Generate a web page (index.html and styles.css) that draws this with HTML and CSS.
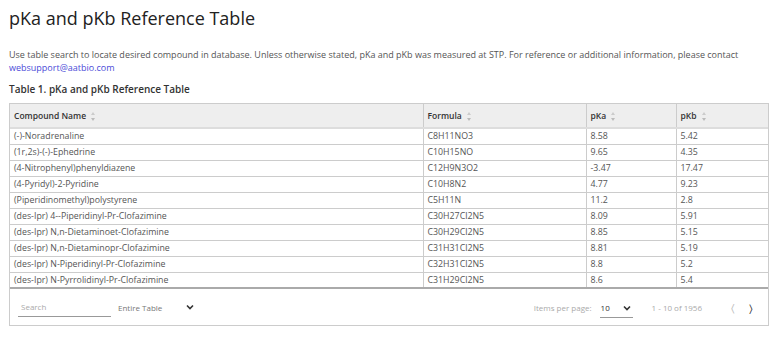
FILE: index.html
```html
<!DOCTYPE html>
<html lang="en">
<head>
    <meta charset="UTF-8">
    <title>pKa and pKb Reference Table</title>
    <link rel="stylesheet" href="styles.css">
</head>
<body>
    <div class="page">
        <h1 class="title">pKa and pKb Reference Table</h1>
        <p class="intro">Use table search to locate desired compound in database. Unless otherwise stated, pKa and pKb was measured at STP. For reference or additional information, please contact <a href="#">websupport@aatbio.com</a></p>
        <h3 class="caption">Table 1. pKa and pKb Reference Table</h3>

        <div class="box">
            <table class="data">
                <thead>
                    <tr>
                        <th class="c-name">Compound Name <span class="sort"></span></th>
                        <th class="c-formula">Formula <span class="sort"></span></th>
                        <th class="c-pka">pKa <span class="sort"></span></th>
                        <th class="c-pkb">pKb <span class="sort"></span></th>
                    </tr>
                </thead>
                <tbody>
                    <tr><td>(-)-Noradrenaline</td><td>C8H11NO3</td><td>8.58</td><td>5.42</td></tr>
                    <tr><td>(1r,2s)-(-)-Ephedrine</td><td>C10H15NO</td><td>9.65</td><td>4.35</td></tr>
                    <tr><td>(4-Nitrophenyl)phenyldiazene</td><td>C12H9N3O2</td><td>-3.47</td><td>17.47</td></tr>
                    <tr><td>(4-Pyridyl)-2-Pyridine</td><td>C10H8N2</td><td>4.77</td><td>9.23</td></tr>
                    <tr><td>(Piperidinomethyl)polystyrene</td><td>C5H11N</td><td>11.2</td><td>2.8</td></tr>
                    <tr><td>(des-Ipr) 4--Piperidinyl-Pr-Clofazimine</td><td>C30H27Cl2N5</td><td>8.09</td><td>5.91</td></tr>
                    <tr><td>(des-Ipr) N,n-Dietaminoet-Clofazimine</td><td>C30H29Cl2N5</td><td>8.85</td><td>5.15</td></tr>
                    <tr><td>(des-Ipr) N,n-Dietaminopr-Clofazimine</td><td>C31H31Cl2N5</td><td>8.81</td><td>5.19</td></tr>
                    <tr><td>(des-Ipr) N-Piperidinyl-Pr-Clofazimine</td><td>C32H31Cl2N5</td><td>8.8</td><td>5.2</td></tr>
                    <tr><td>(des-Ipr) N-Pyrrolidinyl-Pr-Clofazimine</td><td>C31H29Cl2N5</td><td>8.6</td><td>5.4</td></tr>
                </tbody>
            </table>
        </div>

        <div class="footer">
            <div class="filters">
                <input type="text" class="search" placeholder="Search">
                <div class="scope">
                    <span>Entire Table</span>
                    <svg class="chev" width="8" height="6" viewBox="0 0 8 6"><path d="M1 1.5 L4 4.5 L7 1.5" fill="none" stroke="#333" stroke-width="1.6"/></svg>
                </div>
            </div>
            <div class="pager">
                <span class="muted">Items per page:</span>
                <div class="per-page">
                    <span>10</span>
                    <svg class="chev" width="8" height="6" viewBox="0 0 8 6"><path d="M1 1.5 L4 4.5 L7 1.5" fill="none" stroke="#333" stroke-width="1.6"/></svg>
                </div>
                <span class="muted range">1 - 10 of 1956</span>
                <span class="nav prev">&#x2329;</span>
                <span class="nav next">&#x232A;</span>
            </div>
        </div>
    </div>
</body>
</html>
```

FILE: styles.css
```css
*{
    margin: 0; padding: 0;
    box-sizing: border-box;
}
body{
    font-family: 'Open Sans', 'Liberation Sans', sans-serif;
    background: #fff;
    color: #555;
}
.page{
    padding: 6px 12px 0 9px;
}
.title{
    font-size: 18px;
    font-weight: 400;
    color: #222;
    line-height: 24px;
}
.intro{
    margin-top: 18px;
    font-size: 9px;
    line-height: 13px;
    color: #555;
}
.intro a{
    color: #4b4bd8;
    text-decoration: none;
}
.caption{
    margin-top: 8px;
    font-size: 10px;
    font-weight: 600;
    color: #333;
    line-height: 14px;
}
.box{
    margin-top: 7px;
    border: 1px solid #ccc;
    border-bottom: none;
}
.data{
    width: 100%;
    border-collapse: collapse;
    font-size: 8.8px;
}
.data th{
    background: #eee;
    height: 24px;
    text-align: left;
    font-weight: 600;
    font-size: 8.5px;
    color: #333;
    padding: 0 4px;
    border-bottom: 2px solid #ddd;
    border-left: 1px solid #ccc;
}
.data td{
    height: 16px;
    padding: 0 4px;
    border-bottom: 1px solid #ccc;
    border-left: 1px solid #ccc;
}
.data th:first-child,
.data td:first-child{
    border-left: none;
}
.data tbody tr:last-child td{
    border-bottom: 2px solid #aaa;
}
.c-name{ width: 413px; }
.c-formula{ width: 163px; }
.c-pka{ width: 90px; }
.sort{
    display: inline-block;
    width: 6px;
    height: 9px;
    margin-left: 2px;
    vertical-align: middle;
    position: relative;
}
.sort::before,
.sort::after{
    content: "";
    position: absolute;
    left: 1px;
    border-left: 2px solid transparent;
    border-right: 2px solid transparent;
}
.sort::before{
    top: 0;
    border-bottom: 3px solid #ccc;
}
.sort::after{
    bottom: 0;
    border-top: 3px solid #bbb;
}
.footer{
    border: 1px solid #ccc;
    border-top: none;
    height: 37px;
    display: flex;
    align-items: center;
    justify-content: space-between;
    padding: 0 15px 0 8px;
    font-size: 8px;
}
.filters{
    display: flex;
    align-items: center;
}
.search{
    width: 93px;
    height: 17px;
    border: none;
    border-bottom: 1px solid #999;
    font-family: inherit;
    font-size: 8px;
    padding: 0 3px 2px;
    margin-top: 2px;
    outline: none;
}
.search::placeholder{
    color: #aaa;
}
.scope{
    display: flex;
    align-items: center;
    margin-left: 7px;
    color: #777;
    width: 76px;
    justify-content: space-between;
}
.pager{
    display: flex;
    align-items: center;
}
.muted{
    color: #aaa;
}
.per-page{
    display: flex;
    align-items: center;
    justify-content: space-between;
    width: 33px;
    margin-left: 8px;
    padding: 0 2px 4px 1px;
    border-bottom: 1px solid #999;
    color: #333;
    margin-top: 6px;
}
.range{
    margin-left: 19px;
}
.nav{
    font-size: 11px;
    margin-left: 29px;
    color: #bbb;
}
.next{
    margin-left: 14px;
    color: #333;
}
```
